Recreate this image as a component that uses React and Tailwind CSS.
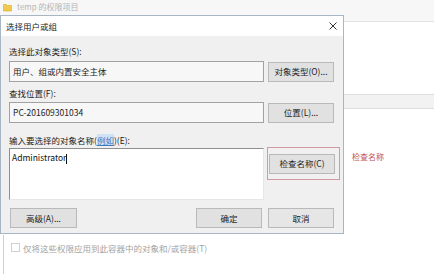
const font = "font-['Noto_Sans_CJK_SC','Noto_Sans',sans-serif]";

function Btn({ children, className = '' }) {
  return (
    <div
      className={`flex items-center justify-center h-[20px] w-[66px] bg-[#e1e1e1] border border-[#b9b9b9] text-[8.5px] text-[#222] ${className}`}
    >
      {children}
    </div>
  );
}

function Folder() {
  return (
    <svg width="9" height="9" viewBox="0 0 9 9">
      <path d="M0.5 1.5h3l1 1h4v5.5h-8z" fill="#f1c94e" stroke="#d9a92b" strokeWidth="0.6" />
    </svg>
  );
}

export default function App() {
  return (
    <div className={`relative w-[434px] h-[274px] overflow-hidden bg-white ${font}`}>
      {/* background window */}
      <div className="h-[22px] bg-[#f7f7f7] border-b border-[#e2e2e2]">
        <div className="flex items-center gap-[5px] pl-[3px] pt-[1px] h-[13px]">
          <Folder />
          <span className="text-[8px] text-[#b5b5b5] leading-none">temp 的权限项目</span>
        </div>
      </div>
      <div className="ml-[344px] mt-[72px] h-[15px] bg-[#f2f2f2] border-y border-[#dedede]" />
      <div className="ml-[3px] mt-[126px] border-l border-[#c8d4de] h-[40px] pl-[7px] pt-[7px] flex items-start gap-[3px]">
        <div className="w-[9px] h-[9px] border border-[#d0d0d0] bg-white mt-[1px]" />
        <span className="text-[8.5px] leading-[12px] text-[#a3a3a3]">仅将这些权限应用到此容器中的对象和/或容器(T)</span>
      </div>

      {/* dialog */}
      <div className="absolute left-0 top-[15px] w-[344px] h-[219px] border border-[#a9b7c5] bg-[#f0f0f0] flex flex-col">
        <div className="h-[20px] bg-white flex items-center justify-between pl-[5px] pr-[6px]">
          <span className="text-[8.5px] text-[#222]">选择用户或组</span>
          <svg width="8" height="8" viewBox="0 0 8 8">
            <path d="M0.5 0.5l7 7M7.5 0.5l-7 7" stroke="#333" strokeWidth="1" />
          </svg>
        </div>

        <div className="pl-[8px] pr-[9px] flex flex-col">
          <div className="mt-[9px] text-[8.5px] leading-[12px] text-[#222]">选择此对象类型(S):</div>
          <div className="mt-[4px] flex items-center justify-between">
            <div className="w-[255px] h-[21px] bg-[#f7f7f7] border border-[#a2a2a2] flex items-center pl-[3px] text-[8.5px] text-[#222]">
              用户、组或内置安全主体
            </div>
            <Btn>对象类型(O)...</Btn>
          </div>

          <div className="mt-[5px] text-[8.5px] leading-[12px] text-[#222]">查找位置(F):</div>
          <div className="mt-[3px] flex items-center justify-between">
            <div className="w-[255px] h-[21px] bg-[#f7f7f7] border border-[#a2a2a2] flex items-center pl-[3px] text-[8.5px] text-[#222]">
              PC-201609301034
            </div>
            <Btn>位置(L)...</Btn>
          </div>

          <div className="mt-[11px] text-[8.5px] leading-[12px] text-[#222]">
            输入要选择的对象名称(<span className="bg-[#cfe3f5] text-[#3a78c0] underline">例如</span>)(E):
          </div>
          <div className="mt-[1px] flex items-start justify-between">
            <div className="mt-[1px] w-[255px] h-[52px] bg-white border border-[#8e8e8e] border-b-[#e6e6e6] border-r-[#e6e6e6] pl-[2px] pt-[2px] text-[8.5px] text-[#111] leading-[12px]">
              Administrator<span className="inline-block w-[1px] h-[10px] bg-[#111] align-middle" />
            </div>
            <div className="-mr-[6px] w-[73px] h-[33px] border border-[#d69a9e] flex items-center justify-start pl-[1px]">
              <Btn>检查名称(C)</Btn>
            </div>
          </div>

          <div className="mt-[8px] flex items-center justify-between">
            <Btn className="w-[67px] ml-[1px]">高级(A)...</Btn>
            <div className="flex items-center gap-[6px]">
              <Btn className="w-[55px] bg-[#dfe6ed] border-[#2a6eb0]">确定</Btn>
              <Btn className="w-[55px] bg-[#e6e6e6]">取消</Btn>
            </div>
          </div>
        </div>
      </div>

      <div className="absolute left-[352px] top-[151px] text-[8px] text-[#c0504d]">检查名称</div>
    </div>
  );
}
